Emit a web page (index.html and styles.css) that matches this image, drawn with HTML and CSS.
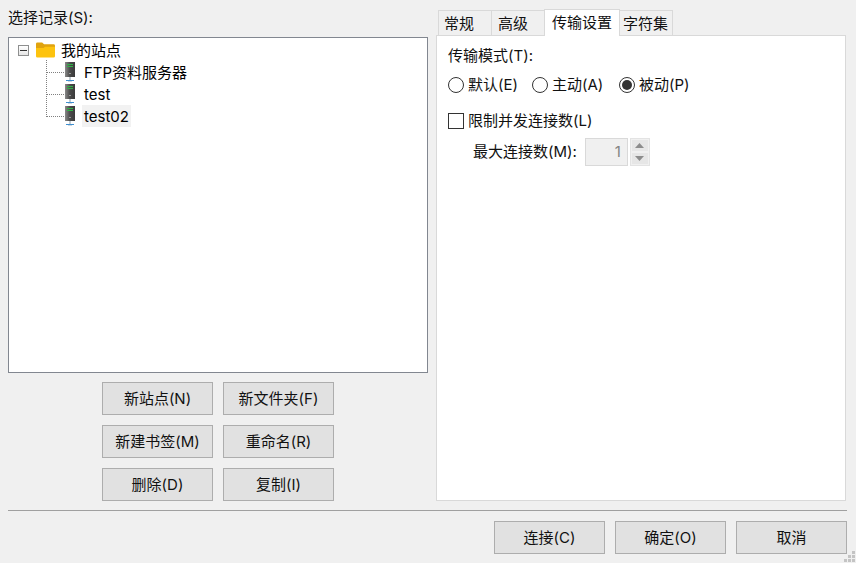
FILE: index.html
```html
<!DOCTYPE html>
<html lang="zh-CN">
<head>
<meta charset="utf-8">
<title>站点管理器</title>
<link rel="stylesheet" href="styles.css">
</head>
<body>
<svg class="defs" width="0" height="0">
  <defs>
    <linearGradient id="body" x1="0" x2="1" y1="0" y2="0">
      <stop offset="0" stop-color="#8a8a8a"/>
      <stop offset="0.5" stop-color="#4a4a4a"/>
      <stop offset="1" stop-color="#3a3a3a"/>
    </linearGradient>
    <symbol id="server" viewBox="0 0 12 21">
      <rect x="1" y="0" width="10" height="15" fill="url(#body)"/>
      <rect x="3" y="2" width="6" height="1" fill="#2fb344"/>
      <rect x="3" y="4" width="6" height="1" fill="#2fb344"/>
      <rect x="5.500" y="11" width="1" height="1" fill="#e6e6e6"/>
      <rect x="5.500" y="15" width="1" height="3" fill="#8899a8"/>
      <rect x="2" y="18" width="8" height="1" fill="#3f8fd0"/>
      <rect x="4" y="19" width="4" height="1" fill="#cfd8e0"/>
    </symbol>
  </defs>
</svg>
<div class="main">
  <section class="left">
    <div class="label">选择记录(S):</div>
    <div class="tree">
      <div class="tree-lines"></div>
      <div class="row root">
        <span class="expander"></span>
        <svg class="folder" width="19" height="16" viewBox="0 0 20 16">
          <path d="M0 1.5A1.5 1.5 0 0 1 1.500 0H6.500L8.500 2H18.500A1.500 1.500 0 0 1 20 3.500V8H0Z" fill="#e0a30f"/>
          <path d="M0 6H8L9.500 4.500H20V14.500A1.500 1.500 0 0 1 18.500 16H1.500A1.500 1.500 0 0 1 0 14.500Z" fill="#fdc30f"/>
        </svg>
        <span class="name">我的站点</span>
      </div>
      <div class="row child"><span class="dash"></span><svg class="srv" width="12" height="21"><use href="#server"/></svg><span class="name">FTP资料服务器</span></div>
      <div class="row child"><span class="dash"></span><svg class="srv" width="12" height="21"><use href="#server"/></svg><span class="name">test</span></div>
      <div class="row child"><span class="dash"></span><svg class="srv" width="12" height="21"><use href="#server"/></svg><span class="name sel">test02</span></div>
    </div>
    <div class="btn-grid">
      <button class="btn">新站点(N)</button>
      <button class="btn">新文件夹(F)</button>
      <button class="btn">新建书签(M)</button>
      <button class="btn">重命名(R)</button>
      <button class="btn">删除(D)</button>
      <button class="btn">复制(I)</button>
    </div>
  </section>
  <section class="right">
    <div class="tabs">
      <div class="tab t1">常规</div>
      <div class="tab t1 second">高级</div>
      <div class="tab active">传输设置</div>
      <div class="tab t1">字符集</div>
    </div>
    <div class="panel">
      <div class="label">传输模式(T):</div>
      <div class="radios">
        <label class="radio"><span class="dot"></span>默认(E)</label>
        <label class="radio"><span class="dot"></span>主动(A)</label>
        <label class="radio on"><span class="dot"></span>被动(P)</label>
      </div>
      <label class="check"><span class="box"></span>限制并发连接数(L)</label>
      <div class="spin-row">
        <span>最大连接数(M):</span>
        <span class="spin-input">1</span>
        <span class="spin-btns">
          <span class="spin-btn"><svg width="9" height="5" viewBox="0 0 9 5"><path d="M4.500 0L9 5H0Z" fill="#8c8c8c"/></svg></span>
          <span class="spin-btn"><svg width="9" height="5" viewBox="0 0 9 5"><path d="M0 0H9L4.500 5Z" fill="#8c8c8c"/></svg></span>
        </span>
      </div>
    </div>
  </section>
</div>
<div class="sep"></div>
<div class="footer">
  <button class="btn">连接(C)</button>
  <button class="btn">确定(O)</button>
  <button class="btn">取消</button>
</div>
<svg class="grip" width="12" height="12" viewBox="0 0 12 12">
  <path d="M8 0h3v3H8zM4 4h3v3H4zM8 4h3v3H8zM0 8h3v3H0zM4 8h3v3H4zM8 8h3v3H8z" fill="#c4c4c4"/>
</svg>
</body>
</html>
```
FILE: styles.css
```css
* { box-sizing: border-box; }
html, body { margin: 0; height: 100%; }
body {
  position: relative;
  width: 856px;
  height: 563px;
  overflow: hidden;
  background: #f0f0f0;
  color: #111;
  font: 15px/20px "Inter", "Noto Sans CJK SC", sans-serif;
  padding: 8px 9px 0 8px;
}
.defs { position: absolute; }
.main { display: flex; gap: 8px; height: 493px; }
.left { width: 420px; }
.label { height: 29px; line-height: 20px; }
.tree {
  position: relative;
  height: 336px;
  background: #fff;
  border: 1px solid #828790;
  padding: 1px 0 0 9px;
}
.tree-lines {
  position: absolute;
  left: 37px;
  top: 22px;
  height: 57px;
  border-left: 1px dotted #808080;
}
.row { display: flex; align-items: center; height: 22px; color: #000; }
.expander {
  position: relative;
  width: 11px;
  height: 11px;
  margin-right: 7px;
  border: 1px solid #8e8f8f;
  background: linear-gradient(#fff, #e6e6e6);
}
.expander::before {
  content: "";
  position: absolute;
  left: 1px;
  top: 4px;
  width: 7px;
  height: 1px;
  background: #333;
}
.folder { margin-right: 4px; }
.child { padding-left: 29px; }
.dash { width: 17px; border-top: 1px dotted #808080; }
.srv { margin-right: 6px; }
.name { height: 22px; padding: 0 2px; line-height: 24px; }
.sel { background: #f2f2f2; }
.btn-grid {
  display: grid;
  grid-template-columns: 111px 111px;
  grid-auto-rows: 33px;
  gap: 10px;
  justify-content: start;
  margin: 9px 0 0 94px;
}
.btn {
  height: 33px;
  padding: 0;
  font: inherit;
  color: #111;
  background: #e1e1e1;
  border: 1px solid #adadad;
  border-radius: 0;
}
.right { width: 410px; }
.tabs { display: flex; align-items: flex-end; height: 27px; padding-left: 2px; }
.tab {
  height: 25px;
  width: 53px;
  background: #f0f0f0;
  border: 1px solid #d9d9d9;
  border-bottom: 0;
  border-right: 0;
  padding-left: 5px;
  line-height: 26px;
}
.second { padding-left: 6px; }
.t1:last-child { border-right: 1px solid #d9d9d9; padding-left: 3px; }
.active {
  height: 27px;
  width: 76px;
  background: #fff;
  padding-left: 7px;
  position: relative;
  border-right: 1px solid #d9d9d9;
  line-height: 25px;
  margin-bottom: -1px;
}
.active + .tab { border-left: 0; }
.panel {
  height: 466px;
  background: #fff;
  border: 1px solid #d9d9d9;
  padding: 10px 0 0 11px;
}
.panel .label { height: 29px; }
.radios { display: grid; grid-template-columns: 84px 87px auto; height: 20px; }
.radio, .check { display: flex; align-items: center; gap: 4px; }
.dot {
  width: 16px;
  height: 16px;
  border: 1px solid #333;
  border-radius: 50%;
  background: #fff;
}
.on .dot { display: flex; align-items: center; justify-content: center; }
.on .dot::before {
  content: "";
  width: 10px;
  height: 10px;
  border-radius: 50%;
  background: #333;
}
.check { height: 20px; margin-top: 16px; }
.box { width: 16px; height: 16px; border: 1px solid #333; background: #fff; }
.spin-row { display: flex; align-items: center; margin: 7px 0 0 25px; height: 28px; }
.spin-input {
  width: 43px;
  height: 28px;
  margin-left: 8px;
  border: 1px solid #d9d9d9;
  background: #f0f0f0;
  color: #838383;
  text-align: right;
  padding-right: 6px;
  line-height: 26px;
}
.spin-btns { display: flex; flex-direction: column; margin-left: 2px; width: 20px; height: 28px; border: 1px solid #e3e3e3; }
.spin-btn { flex: 1; display: flex; align-items: center; justify-content: center; background: #e6e6e6; border: 1px solid #f0f0f0; }
.sep { height: 1px; margin-top: 9px; background: #a0a0a0; }
.footer { display: flex; justify-content: flex-end; gap: 10px; margin-top: 10px; }
.footer .btn { width: 111px; }
.grip { position: absolute; right: 0; bottom: 0; }
```
